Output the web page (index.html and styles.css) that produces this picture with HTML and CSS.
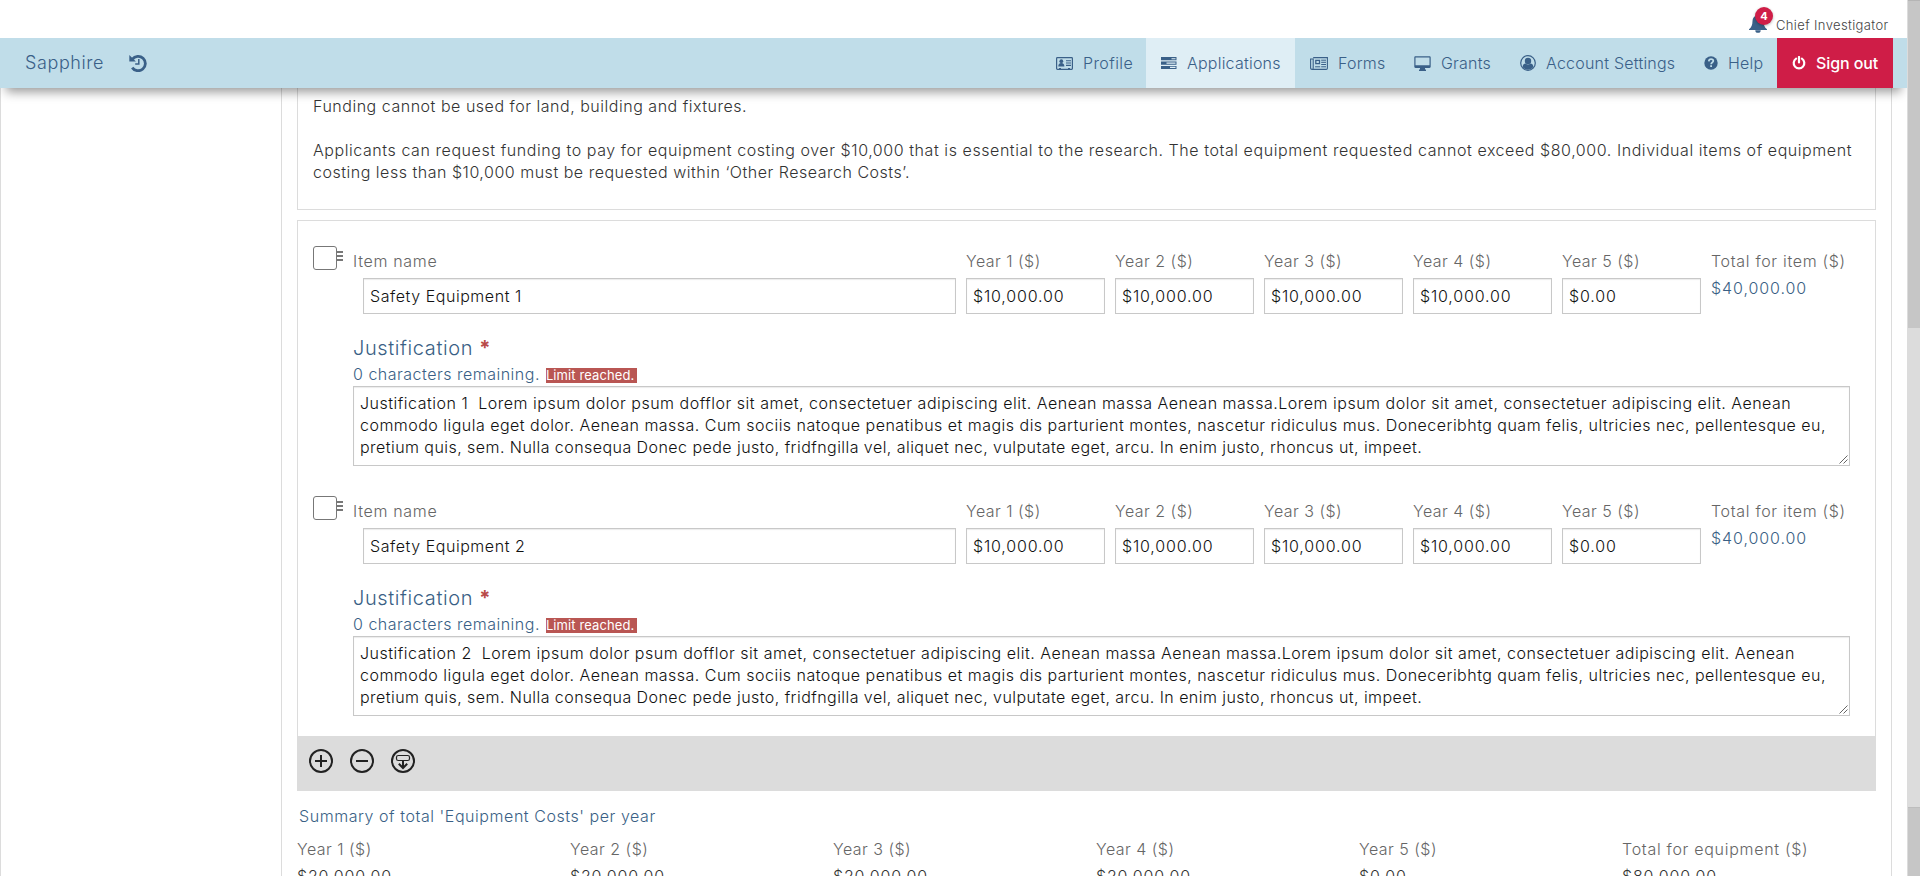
FILE: index.html
```html
<!DOCTYPE html>
<html lang="en">
<head>
<meta charset="utf-8">
<title>Sapphire - Equipment Costs</title>
<link rel="stylesheet" href="styles.css">
</head>
<body>
<div class="page">
  <header class="topbar">
    <span class="bell">
      <svg width="20" height="20" viewBox="0 0 20 20"><path d="M10 1.2c.9 0 1.400.6 1.400 1.300 2.600.7 4 2.700 4.100 5.500.1 4 .9 6.200 3.500 8.200v.8H1v-.8c2.600-2 3.400-4.200 3.500-8.200.1-2.800 1.500-4.800 4.100-5.500 0-.7.500-1.300 1.400-1.300z" fill="#3a6088"/><path d="M7.300 17.200h5.400a2.700 2.600 0 0 1-5.400 0z" fill="#3a6088"/></svg>
      <span class="badge">4</span>
    </span>
    <span class="user">Chief Investigator</span>
  </header>
  <nav class="nav">
    <span class="brand">Sapphire</span>
    <svg class="history" width="18" height="18" viewBox="0 0 18 18"><path d="M3.400 5.200A7.200 7.200 0 1 1 3.200 13.600" fill="none" stroke="#3a6088" stroke-width="2.800"/><path d="M.3.900v6.500h6.600z" fill="#3a6088"/><path d="M9.800 5v5H6.200" fill="none" stroke="#3a6088" stroke-width="1.500"/></svg>
    <div class="menu">
      <a class="item profile"><svg width="17" height="13" viewBox="0 0 17 13"><rect x=".6" y=".6" width="15.800" height="11.800" rx=".8" fill="none" stroke="#3a6088" stroke-width="1.200"/><circle cx="5.300" cy="4.200" r="1.900" fill="#3a6088"/><path d="M2.300 9.600c0-2.400.9-3.600 3-3.600s3.100 1.200 3.100 3.600zM3 11h2v1.500H3zM12 11h2v1.500h-2z" fill="#3a6088"/><path d="M10 3.700h5M10 6h5M10 8.400h5" stroke="#3a6088" stroke-width="1.100"/></svg><span>Profile</span></a>
      <a class="item applications"><svg width="16" height="12" viewBox="0 0 16 12"><path d="M0 0h15.500v3.300H0zM0 4.500h15.500v3.200H0zM0 8.900h15.500V12H0z" fill="#3a6088"/><path d="M10.500 1.700h4M5.500 6.100h9M9 10.400h5.500" stroke="#dfeef5" stroke-width="1.100"/></svg><span>Applications</span></a>
      <a class="item forms"><svg width="18" height="13" viewBox="0 0 18 13"><path d="M3.200.6h14.200v10.600c0 .7-.5 1.200-1.200 1.200H2c-.8 0-1.400-.5-1.400-1.300V2h2.600v9c0 .8-.5 1.400-1.200 1.400" fill="none" stroke="#3a6088" stroke-width="1.100"/><path d="M5.800 3.400h3.700v3.300H5.800z" fill="none" stroke="#3a6088" stroke-width="1.300"/><path d="M11.200 3.200H16M11.200 5.300H16M11.200 7.500H16M5.100 9.800h5.100M11.200 9.800H16" stroke="#3a6088" stroke-width="1"/></svg><span>Forms</span></a>
      <a class="item grants"><svg width="17" height="15" viewBox="0 0 17 15"><path d="M1.500.3h14c.7 0 1.200.5 1.200 1.200v9.300c0 .7-.5 1.200-1.200 1.200H11v1.400h1V15H5v-1.600h1V12H1.500C.8 12 .3 11.500.3 10.800V1.500C.3.800.8.300 1.500.300zM1.500 1.500v7.700h14V1.500z" fill="#3a6088" fill-rule="evenodd"/></svg><span>Grants</span></a>
      <a class="item account"><svg width="16" height="16" viewBox="0 0 16 16"><circle cx="8" cy="8" r="7.300" fill="none" stroke="#3a6088" stroke-width="1.200"/><circle cx="8" cy="6" r="3.200" fill="#3a6088"/><path d="M2.500 12c.4-2.400 1.500-3.500 3-3.500 1.600 1.200 3.400 1.200 5 0 1.500 0 2.600 1.100 3 3.500A7 7 0 0 1 2.500 12z" fill="#3a6088"/></svg><span>Account Settings</span></a>
      <a class="item help"><svg width="14" height="14" viewBox="0 0 14 14"><circle cx="7" cy="7" r="6.700" fill="#3a6088"/><path d="M4.800 5.400C4.900 3.800 5.900 3.200 7.100 3.200s2.200.7 2.200 1.800c0 1.500-2.200 1.500-2.200 3.200" fill="none" stroke="#c0dde9" stroke-width="1.700"/><path d="M6.200 9.300h1.800V11H6.200z" fill="#c0dde9"/></svg><span>Help</span></a>
      <a class="item signout"><svg width="14" height="14" viewBox="0 0 14 14"><path d="M4.100 2.700a5.300 5.300 0 1 0 5.800 0" fill="none" stroke="#fff" stroke-width="2.200" stroke-linecap="round"/><path d="M7 1v5.500" stroke="#fff" stroke-width="2.200" stroke-linecap="round"/></svg><span>Sign out</span></a>
    </div>
  </nav>
  <div class="body">
    <aside class="side"></aside>
    <main class="main">
      <section class="intro">
        <p class="l1">Funding cannot be used for land, building and fixtures.</p>
        <p class="l2">Applicants can request funding to pay for equipment costing over $10,000 that is essential to the research. The total equipment requested cannot exceed $80,000. Individual items of equipment</p>
        <p class="l3">costing less than $10,000 must be requested within ‘Other Research Costs’.</p>
      </section>
      <section class="items">
        <article class="entry">
          <div class="handle"><span class="check"></span><span class="grip"></span></div>
          <div class="fields">
            <div class="row">
              <div class="col name"><label>Item name</label><div class="input">Safety Equipment 1</div></div>
              <div class="col"><label>Year 1 ($)</label><div class="input money">$10,000.00</div></div>
              <div class="col"><label>Year 2 ($)</label><div class="input money">$10,000.00</div></div>
              <div class="col"><label>Year 3 ($)</label><div class="input money">$10,000.00</div></div>
              <div class="col"><label>Year 4 ($)</label><div class="input money">$10,000.00</div></div>
              <div class="col"><label>Year 5 ($)</label><div class="input money">$0.00</div></div>
              <div class="col total"><label>Total for item ($)</label><div class="sum">$40,000.00</div></div>
            </div>
            <h3>Justification <b>*</b></h3>
            <div class="remain"><span>0 characters remaining.</span><span class="limit">Limit reached.</span></div>
            <div class="area"><p class="t1">Justification 1&nbsp; Lorem ipsum dolor psum dofflor sit amet, consectetuer adipiscing elit. Aenean massa Aenean massa.Lorem ipsum dolor sit amet, consectetuer adipiscing elit. Aenean</p><p class="t2">commodo ligula eget dolor. Aenean massa. Cum sociis natoque penatibus et magis dis parturient montes, nascetur ridiculus mus. Doneceribhtg quam felis, ultricies nec, pellentesque eu,</p><p class="t3">pretium quis, sem. Nulla consequa Donec pede justo, fridfngilla vel, aliquet nec, vulputate eget, arcu. In enim justo, rhoncus ut, impeet.</p><svg class="resizer" width="9" height="9" viewBox="0 0 9 9"><path d="M.5 8.500l8-8M4.500 8.500l4-4" stroke="#666" stroke-width="1"/></svg></div>
          </div>
        </article>
        <article class="entry">
          <div class="handle"><span class="check"></span><span class="grip"></span></div>
          <div class="fields">
            <div class="row">
              <div class="col name"><label>Item name</label><div class="input">Safety Equipment 2</div></div>
              <div class="col"><label>Year 1 ($)</label><div class="input money">$10,000.00</div></div>
              <div class="col"><label>Year 2 ($)</label><div class="input money">$10,000.00</div></div>
              <div class="col"><label>Year 3 ($)</label><div class="input money">$10,000.00</div></div>
              <div class="col"><label>Year 4 ($)</label><div class="input money">$10,000.00</div></div>
              <div class="col"><label>Year 5 ($)</label><div class="input money">$0.00</div></div>
              <div class="col total"><label>Total for item ($)</label><div class="sum">$40,000.00</div></div>
            </div>
            <h3>Justification <b>*</b></h3>
            <div class="remain"><span>0 characters remaining.</span><span class="limit">Limit reached.</span></div>
            <div class="area"><p class="t1">Justification 2&nbsp; Lorem ipsum dolor psum dofflor sit amet, consectetuer adipiscing elit. Aenean massa Aenean massa.Lorem ipsum dolor sit amet, consectetuer adipiscing elit. Aenean</p><p class="t2">commodo ligula eget dolor. Aenean massa. Cum sociis natoque penatibus et magis dis parturient montes, nascetur ridiculus mus. Doneceribhtg quam felis, ultricies nec, pellentesque eu,</p><p class="t3">pretium quis, sem. Nulla consequa Donec pede justo, fridfngilla vel, aliquet nec, vulputate eget, arcu. In enim justo, rhoncus ut, impeet.</p><svg class="resizer" width="9" height="9" viewBox="0 0 9 9"><path d="M.5 8.500l8-8M4.500 8.500l4-4" stroke="#666" stroke-width="1"/></svg></div>
          </div>
        </article>
        <div class="tools">
          <svg width="24" height="24" viewBox="0 0 24 24" fill="none" stroke="#222"><circle cx="12" cy="12" r="11" stroke-width="2"/><path d="M12 6v12M6 12h12" stroke-width="2"/></svg>
          <svg width="24" height="24" viewBox="0 0 24 24" fill="none" stroke="#222"><circle cx="12" cy="12" r="11" stroke-width="2"/><path d="M6 12h12" stroke-width="2"/></svg>
          <svg width="24" height="24" viewBox="0 0 24 24" fill="none" stroke="#222"><circle cx="12" cy="12" r="11" stroke-width="2"/><rect x="5.500" y="6.500" width="13" height="5" rx="1.800" stroke-width="1.200"/><path d="M12 11.500v7" stroke-width="2"/><path d="M7.800 14.800l4.200 4.200 4.200-4.200" stroke-width="2"/></svg>
        </div>
      </section>
      <section class="summary">
        <h4>Summary of total 'Equipment Costs' per year</h4>
        <div class="totals">
          <div><label>Year 1 ($)</label><span>$20,000.00</span></div>
          <div><label>Year 2 ($)</label><span>$20,000.00</span></div>
          <div><label>Year 3 ($)</label><span>$20,000.00</span></div>
          <div><label>Year 4 ($)</label><span>$20,000.00</span></div>
          <div><label>Year 5 ($)</label><span>$0.00</span></div>
          <div><label class="wide">Total for equipment ($)</label><span>$80,000.00</span></div>
        </div>
      </section>
    </main>
  </div>
</div>
<div class="scroll"><span class="thumb first"></span><span class="thumb second"></span></div>
</body>
</html>
```
FILE: styles.css
```css
* { box-sizing: border-box; }
body { margin: 0; height: 876px; overflow: hidden; display: flex; background: #fff; font: 300 16px/22px Inter, "Open Sans", sans-serif; color: #333; }
p, h3, h4 { margin: 0; font-weight: 300; white-space: nowrap; }
label { display: block; white-space: nowrap; color: #666; letter-spacing: .48px; }
svg { display: block; flex: none; }
.page { width: 1907px; height: 876px; display: flex; flex-direction: column; overflow: hidden; }
.topbar { height: 38px; flex: none; display: flex; justify-content: flex-end; padding: 13px 19px 0 0; }
.bell { position: relative; width: 28px; height: 20px; }
.badge { position: absolute; left: 7px; top: -6px; width: 18px; height: 18px; border-radius: 50%; background: #cf1d47; color: #fff; font-size: 11px; line-height: 18px; font-weight: 700; text-align: center; box-shadow: 0 1px 3px rgba(0,0,0,.3); }
.user { font-size: 13px; line-height: 24px; letter-spacing: .37px; color: #444; width: 112px; white-space: nowrap; }
.nav { height: 50px; flex: none; background: #c0dde9; display: flex; align-items: center; color: #3a6088; position: relative; box-shadow: 0 10px 10px -6px rgba(0,0,0,.4); padding-right: 14px; }
.brand { width: 104px; padding-left: 25px; font-size: 18px; letter-spacing: .6px; }
.history { margin-left: 25px; }
.menu { margin-left: auto; display: flex; height: 50px; }
.item { display: flex; align-items: center; white-space: nowrap; letter-spacing: .22px; padding-left: 15px; }
.item svg { margin-right: 10px; }
.profile { width: 105px; }
.profile span { letter-spacing: .4px; }
.applications { width: 149px; background: #dfeef5; }
.forms { width: 104px; }
.grants { width: 106px; }
.account { width: 184px; }
.help { width: 88px; }
.signout { width: 116px; background: #cf1d47; color: #fff; font-weight: 500; letter-spacing: -.1px; }
.body { flex: 1; display: flex; min-height: 0; border-left: 1px solid #dcdcdc; }
.side { width: 280px; flex: none; }
.main { width: 1611px; border: solid #dcdcdc; border-width: 0 1px; padding: 0 15px; }
.intro { height: 122px; border: 1px solid #dcdcdc; border-top: 0; padding: 7px 15px; }
.l1 { margin-bottom: 22px; letter-spacing: .52px; }
.l2 { letter-spacing: .567px; }
.l3 { letter-spacing: .515px; }
.items { display: flex; flex-direction: column; margin-top: 10px; border: 1px solid #dcdcdc; border-bottom: 0; height: 571px; padding-top: 25px; }
.entry { flex: none; height: 250px; display: flex; padding-left: 15px; }
.handle { display: flex; width: 40px; }
.check { width: 24px; height: 24px; border: 1px solid #777; border-radius: 3px; background: #fff; }
.grip { width: 6px; height: 10px; margin-top: 5px; border: solid #777; border-width: 2px 0; background: linear-gradient(#777,#777) 0 2px/6px 2px no-repeat; }
.fields { width: 1497px; }
.row { display: flex; gap: 10px; padding-top: 4px; height: 91px; }
.col { flex: none; width: 139px; }
.name.col { width: 603px; }
.name .input { margin-left: 10px; }
.name label, .total label { letter-spacing: .68px; }
.input { height: 36px; margin-top: 6px; border: 1px solid #c8c8c8; padding: 6px; color: #111; white-space: nowrap; letter-spacing: .55px; box-shadow: inset 0 1px 1px rgba(0,0,0,.08); }
.input.money { letter-spacing: .83px; }
.sum { margin-top: 5px; color: #3a5f85; letter-spacing: .92px; }
h3 { font-size: 20px; line-height: 22px; color: #3a5f85; letter-spacing: .6px; }
h3 b { color: #b94a48; font-weight: 700; }
.remain { display: flex; align-items: center; gap: 6px; height: 22px; margin-top: 4px; color: #3a5f85; letter-spacing: .5px; }
.limit { background: #b95653; color: #fff; font-size: 13px; line-height: 15px; font-weight: 400; width: 91px; white-space: nowrap; margin-top: 3px; letter-spacing: .1px; }
.area { position: relative; height: 80px; margin-top: 1px; border: 1px solid #c8c8c8; padding: 5px 6px; color: #111; box-shadow: inset 0 1px 1px rgba(0,0,0,.08); }
.t1 { letter-spacing: .51px; }
.t2 { letter-spacing: .48px; }
.t3 { letter-spacing: .447px; }
.resizer { position: absolute; right: 1px; bottom: 1px; }
.tools { flex: none; height: 55px; margin: -10px -1px 0; background: #dcdcdc; display: flex; gap: 17px; padding: 13px 12px; }
.summary { padding-top: 14px; }
.summary h4 { padding-left: 2px; font-size: 16px; color: #3a5f85; letter-spacing: .555px; }
.totals { display: grid; grid-template-columns: 273px repeat(5, 263px); margin-top: 11px; }
.totals span { display: block; margin-top: 5px; letter-spacing: .83px; }
.totals .wide { letter-spacing: .71px; }
.scroll { width: 13px; height: 876px; background: #dcdcdc; display: flex; flex-direction: column; justify-content: space-between; padding-left: 1px; }
.thumb { background: #c6c6c6; }
.first { height: 328px; border-top: 1px solid #b5b5b5; }
.second { height: 69px; border-top: 1px solid #bdbdbd; }
```
